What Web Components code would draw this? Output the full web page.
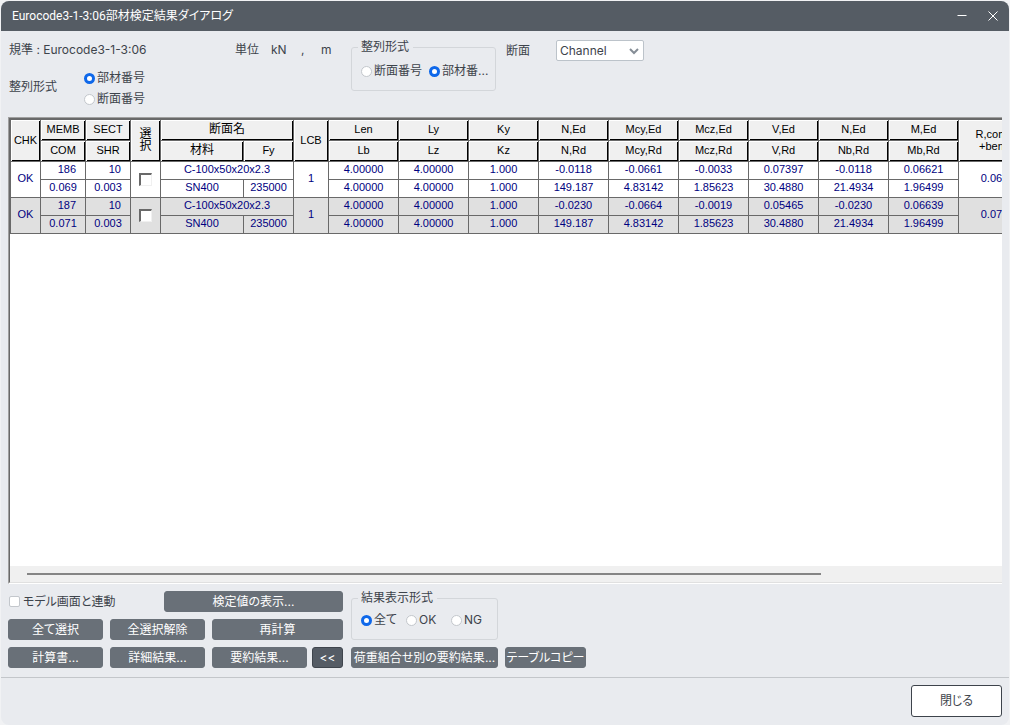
<!DOCTYPE html>
<html lang="ja">
<head>
<meta charset="utf-8">
<title>Eurocode3-1-3:06部材検定結果ダイアログ</title>
<style>
  html, body { height: 100%; }
  body {
    margin: 0;
    background: #f1f2f4;
    color: #3d434b;
    font: 12px/14px Inter, "Noto Sans CJK JP", sans-serif;
    font-feature-settings: "palt";
    --panel: #e9ebef;
    --accent: #0f68ea;
    --line: #d3d6da;
  }
</style>
</head>
<body>
<check-dialog></check-dialog>

<script>
  const radioStyle = `
    input[type=radio] {
      appearance: none;
      flex: none;
      width: 11px;
      height: 11px;
      margin: 0;
      border: 1px solid #c3c7cc;
      border-radius: 50%;
      background: white;
    }
    input[type=radio]:checked { border: 3px solid var(--accent); }
  `;

  // options are separated by "|", the legend is optional
  class RadioGroup extends HTMLElement {
    constructor() {
      super();
      this.attachShadow({ mode: 'open' });
    }

    connectedCallback() {
      const legend = this.getAttribute('legend');
      const value = this.getAttribute('value');
      const options = this.getAttribute('options').split('|').map((text) => `
        <label><input type="radio" name="option" ${text === value ? 'checked' : ''}>${text}</label>`).join('');

      this.shadowRoot.innerHTML = `
        <style>
          ${radioStyle}
          :host { display: grid; }
          .options { display: flex; }
          :host([vertical]) .options { flex-direction: column; gap: 7px; }
          label {
            display: flex;
            flex: none;
            align-items: center;
            gap: 2px;
            width: var(--option-width, auto);
            white-space: nowrap;
          }
          fieldset {
            min-width: 0;
            margin: 0;
            padding: var(--group-padding, 8px) 0 12px 9px;
            border: 1px solid var(--line);
            border-radius: 3px;
            box-sizing: border-box;
          }
          legend { margin-left: -3px; padding: 0 4px 0 3px; }
        </style>
        ${legend
          ? `<fieldset><legend>${legend}</legend><div class="options">${options}</div></fieldset>`
          : `<div class="options" role="radiogroup">${options}</div>`}
      `;
    }
  }

  class PushButton extends HTMLElement {
    constructor() {
      super();
      this.attachShadow({ mode: 'open' });
      this.shadowRoot.innerHTML = `
        <style>
          :host { display: grid; height: 21px; }
          button {
            padding: 0;
            border: 1px solid #697078;
            border-radius: 3px;
            background: #697078;
            color: white;
            font: inherit;
            white-space: nowrap;
          }
          :host([pressed]) button { background: #555c65; border-color: #3f454d; }
          :host([outline]) { height: 32px; }
          :host([outline]) button { background: white; border-color: #3d434b; color: #3d434b; }
        </style>
        <button type="button"><slot></slot></button>
      `;
    }
  }

  class TitleBar extends HTMLElement {
    constructor() {
      super();
      this.attachShadow({ mode: 'open' });
      this.shadowRoot.innerHTML = `
        <style>
          :host {
            display: flex;
            align-items: center;
            height: 30px;
            padding: 0 6px 0 11px;
            background: #555c64;
            color: white;
          }
          h1 { flex: 1; margin: 0; font: inherit; }
          button {
            width: 20px;
            height: 20px;
            margin-left: 11px;
            padding: 0;
            border: 0;
            background: none;
            color: inherit;
          }
          svg { display: block; margin: auto; }
        </style>
        <h1><slot></slot></h1>
        <button type="button" aria-label="最小化">
          <svg width="10" height="10" viewBox="0 0 10 10"><path d="M0.500 4.500H9.500" stroke="currentColor"/></svg>
        </button>
        <button type="button" aria-label="終了">
          <svg width="10" height="10" viewBox="0 0 10 10"><path d="M0.500 0.500L9.500 9.500M9.500 0.500L0.500 9.500" stroke="currentColor" fill="none"/></svg>
        </button>
      `;
    }
  }

  class SectionSelect extends HTMLElement {
    constructor() {
      super();
      this.attachShadow({ mode: 'open' });
      this.shadowRoot.innerHTML = `
        <style>
          :host { display: flex; align-items: center; height: 21px; }
          label { width: 50px; }
          .box { display: grid; align-items: center; width: 88px; height: 21px; }
          select, svg { grid-area: 1 / 1; }
          select {
            appearance: none;
            width: 100%;
            height: 100%;
            padding: 0 3px;
            border: 1px solid #bcc3ca;
            border-radius: 2px;
            background: white;
            color: inherit;
            font: inherit;
          }
          svg { justify-self: end; margin-right: 5px; pointer-events: none; }
        </style>
        <label for="section">断面</label>
        <div class="box">
          <select id="section"><option>Channel</option></select>
          <svg width="10" height="8" viewBox="0 0 10 8"><path d="M1 2L5 6L9 2" stroke="#858d96" stroke-width="2" fill="none"/></svg>
        </div>
      `;
    }
  }

  const columns = [
    ['Len', 'Lb'], ['Ly', 'Lz'], ['Ky', 'Kz'], ['N,Ed', 'N,Rd'], ['Mcy,Ed', 'Mcy,Rd'],
    ['Mcz,Ed', 'Mcz,Rd'], ['V,Ed', 'V,Rd'], ['N,Ed', 'Nb,Rd'], ['M,Ed', 'Mb,Rd']
  ];

  const members = [
    {
      memb: 186, sect: 10, com: '0.069', shr: '0.003',
      upper: ['4.00000', '4.00000', '1.000', '-0.0118', '-0.0661', '-0.0033', '0.07397', '-0.0118', '0.06621'],
      lower: ['4.00000', '4.00000', '1.000', '149.187', '4.83142', '1.85623', '30.4880', '21.4934', '1.96499']
    },
    {
      memb: 187, sect: 10, com: '0.071', shr: '0.003',
      upper: ['4.00000', '4.00000', '1.000', '-0.0230', '-0.0664', '-0.0019', '0.05465', '-0.0230', '0.06639'],
      lower: ['4.00000', '4.00000', '1.000', '149.187', '4.83142', '1.85623', '30.4880', '21.4934', '1.96499']
    }
  ];

  const cells = (tag, list) => list.map((text) => `<${tag}>${text}</${tag}>`).join('');

  class ResultTable extends HTMLElement {
    constructor() {
      super();
      this.attachShadow({ mode: 'open' });
      this.render();
    }

    renderMember(m) {
      return `
        <tbody>
          <tr>
            <td rowspan="2">OK</td>
            <td class="id">${m.memb}</td>
            <td class="id">${m.sect}</td>
            <td rowspan="2"><input type="checkbox" aria-label="選択 ${m.memb}"></td>
            <td colspan="2">C-100x50x20x2.3</td>
            <td rowspan="2">1</td>
            ${cells('td', m.upper)}
            <td rowspan="2">${m.com}</td>
          </tr>
          <tr>
            <td>${m.com}</td>
            <td>${m.shr}</td>
            <td>SN400</td>
            <td>235000</td>
            ${cells('td', m.lower)}
          </tr>
        </tbody>`;
    }

    render() {
      const widths = [30, 45, 45, 30, 83, 50, 35, ...columns.map(() => 70), 72];
      const total = widths.reduce((a, b) => a + b, 1);

      this.shadowRoot.innerHTML = `
        <style>
          :host {
            display: flex;
            border: 1px solid #a0a0a0;
            border-width: 1px 0 1px 1px;
            border-bottom-color: white;
          }
          .frame {
            flex: 1;
            display: flex;
            flex-direction: column;
            min-width: 0;
            border: 1px solid #696969;
            border-width: 1px 0 1px 1px;
            border-bottom-color: #e0e0e0;
            background: white;
          }
          .view { flex: 1; min-height: 0; overflow: hidden; }
          table {
            width: ${total}px;
            table-layout: fixed;
            border-collapse: separate;
            border-spacing: 0;
            border: 1px solid #696969;
            border-width: 1px 0 0 1px;
            color: #000080;
            font: 11px/14px "Liberation Sans", "Noto Sans CJK JP", sans-serif;
            text-align: center;
          }
          th, td {
            height: 18px;
            padding: 0 0 3px;
            border: 1px solid #696969;
            border-width: 0 1px 1px 0;
            box-sizing: border-box;
            white-space: nowrap;
          }
          th {
            height: 21px;
            padding: 0 0 2px;
            background: #f0f0f0;
            box-shadow: inset 1px 1px white, inset -1px -1px black;
            color: black;
            font-weight: normal;
            line-height: 12px;
          }
          th:lang(ja) { font-size: 12px; }
          .id { padding-right: 9px; text-align: right; }
          tbody:nth-of-type(even) { background: #e0e0e0; }
          input {
            appearance: none;
            display: block;
            width: 13px;
            height: 13px;
            margin: 3px auto 0;
            border: 1px solid #f0f0f0;
            border-top: 2px solid #696969;
            border-left: 2px solid #696969;
            background: white;
          }
          .scrollbar { display: flex; align-items: center; height: 16px; background: #f0f0f0; }
          .thumb { width: 80%; height: 2px; margin-left: 17px; background: #858585; }
        </style>
        <div class="frame">
          <div class="view">
            <table lang="en">
              <colgroup>${widths.map((w) => `<col style="width: ${w}px">`).join('')}</colgroup>
              <thead>
                <tr>
                  <th rowspan="2">CHK</th>
                  <th>MEMB</th>
                  <th>SECT</th>
                  <th rowspan="2" lang="ja">選<br>択</th>
                  <th colspan="2" lang="ja">断面名</th>
                  <th rowspan="2">LCB</th>
                  ${cells('th', columns.map((c) => c[0]))}
                  <th rowspan="2">R,comb<br>+bend</th>
                </tr>
                <tr>
                  <th>COM</th>
                  <th>SHR</th>
                  <th lang="ja">材料</th>
                  <th>Fy</th>
                  ${cells('th', columns.map((c) => c[1]))}
                </tr>
              </thead>
              ${members.map((m) => this.renderMember(m)).join('')}
            </table>
          </div>
          <div class="scrollbar"><div class="thumb"></div></div>
        </div>
      `;
    }
  }

  class CheckDialog extends HTMLElement {
    constructor() {
      super();
      this.attachShadow({ mode: 'open' });
      this.shadowRoot.innerHTML = `
        <style>
          :host { display: block; height: 100%; padding: 1px 1px 0; box-sizing: border-box; }
          .window {
            display: flex;
            flex-direction: column;
            height: 100%;
            border-radius: 8px;
            background: var(--panel);
            overflow: hidden;
          }
          title-bar { font-family: Roboto, "Noto Sans CJK JP", sans-serif; }
          .settings { display: flex; align-items: flex-start; padding: 9px 7px 0 8px; height: 77px; }
          .code { width: 226px; padding-top: 3px; }
          .sort { display: flex; align-items: center; margin-top: 14px; }
          .sort span { width: 75px; padding-bottom: 3px; }
          .units { display: flex; width: 116px; padding-top: 3px; }
          .units span:nth-child(1) { width: 36px; }
          .units span:nth-child(2) { width: 30px; }
          .units span:nth-child(3) { width: 20px; }
          .order { width: 145px; margin-right: 10px; --option-width: 68px; --group-padding: 10px; }
          result-table { flex: 1; min-height: 0; margin: 0 7px; }
          .actions { display: flex; gap: 8px; padding: 7px 7px 9px; }
          .left { display: grid; gap: 7px; width: 335px; }
          .row { display: flex; gap: 7px; }
          .row > push-button { width: 95px; }
          .row > .wide { flex: 1; }
          .row > .small { width: 31px; margin-left: -2px; }
          .link { display: flex; align-items: center; gap: 3px; width: 149px; }
          .link input {
            appearance: none;
            width: 11px;
            height: 11px;
            margin: 0 0 0 1px;
            border: 1px solid #c3c7cc;
            border-radius: 2px;
            background: white;
          }
          .right { display: grid; grid-template: 49px 21px / 147px 81px; gap: 7px; }
          .right radio-group { grid-column: 1 / -1; width: 147px; --option-width: 45px; }
          footer {
            display: flex;
            justify-content: flex-end;
            padding: 7px 7px 8px;
            border-top: 1px solid #c3c6ca;
          }
          footer push-button { width: 91px; }
        </style>
        <div class="window">
          <title-bar>Eurocode3-1-3:06部材検定結果ダイアログ</title-bar>
          <div class="settings">
            <div class="code">
              <div>規準 : Eurocode3-1-3:06</div>
              <div class="sort">
                <span>整列形式</span>
                <radio-group vertical options="部材番号|断面番号" value="部材番号"></radio-group>
              </div>
            </div>
            <div class="units"><span>単位</span><span>kN</span><span>,</span><span>m</span></div>
            <radio-group class="order" legend="整列形式" options="断面番号|部材番..." value="部材番..."></radio-group>
            <section-select></section-select>
          </div>
          <result-table></result-table>
          <div class="actions">
            <div class="left">
              <div class="row">
                <label class="link"><input type="checkbox">モデル画面と連動</label>
                <push-button class="wide">検定値の表示...</push-button>
              </div>
              <div class="row">
                <push-button>全て選択</push-button>
                <push-button>全選択解除</push-button>
                <push-button class="wide">再計算</push-button>
              </div>
              <div class="row">
                <push-button>計算書...</push-button>
                <push-button>詳細結果...</push-button>
                <push-button>要約結果...</push-button>
                <push-button class="small" pressed>&lt;&lt;</push-button>
              </div>
            </div>
            <div class="right">
              <radio-group legend="結果表示形式" options="全て|OK|NG" value="全て"></radio-group>
              <push-button>荷重組合せ別の要約結果...</push-button>
              <push-button>テーブルコピー</push-button>
            </div>
          </div>
          <footer><push-button outline>閉じる</push-button></footer>
        </div>
      `;
    }
  }

  customElements.define('radio-group', RadioGroup);
  customElements.define('push-button', PushButton);
  customElements.define('title-bar', TitleBar);
  customElements.define('section-select', SectionSelect);
  customElements.define('result-table', ResultTable);
  customElements.define('check-dialog', CheckDialog);
</script>
</body>
</html>
